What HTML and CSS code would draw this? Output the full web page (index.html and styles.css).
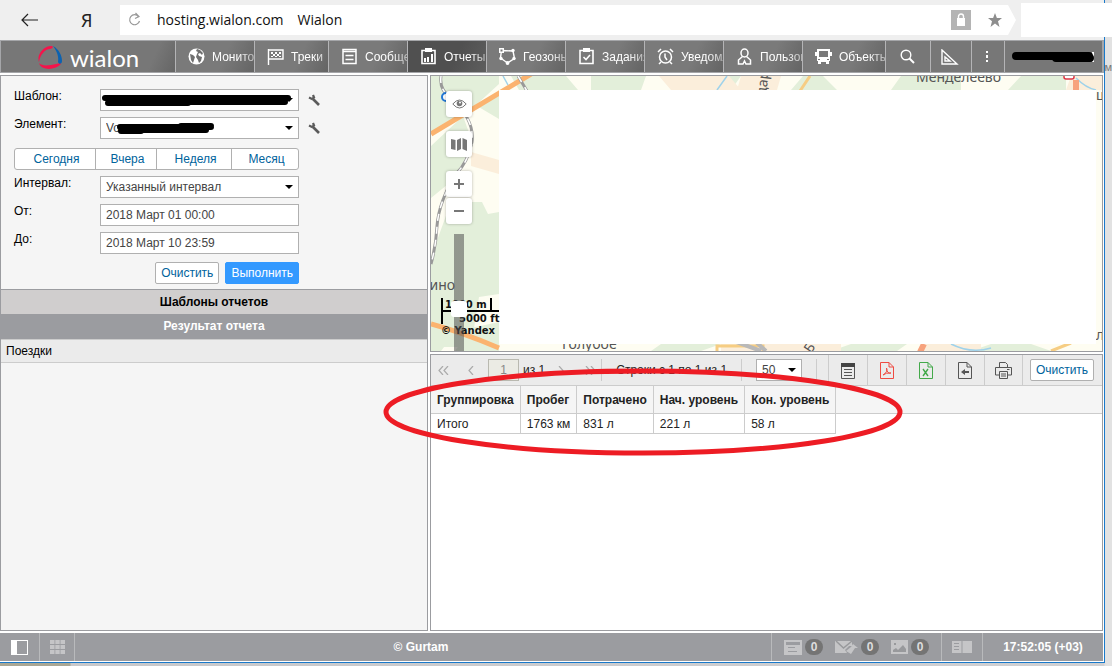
FILE: index.html
```html
<!DOCTYPE html>
<html lang="ru">
<head>
<meta charset="utf-8">
<title>Wialon</title>
<link rel="stylesheet" href="styles.css">
</head>
<body>
<span class="desk-letter">м</span>
<div class="window">
  <header class="chrome">
    <button class="chrome-btn back" aria-label="Назад"><svg width="18" height="14" viewBox="0 0 18 14"><path d="M17 7H1M7 1 1 7l6 6" fill="none" stroke="#222" stroke-width="1.2"/></svg></button>
    <button class="chrome-btn yandex">Я</button>
    <div class="address">
      <button class="chrome-btn" aria-label="Обновить"><svg width="13" height="16" viewBox="0 0 13 16"><path d="M10.500 4.500A5 5 0 1 0 11.500 9M7.500 1l3.500 3.500-4 2" fill="none" stroke="#999" stroke-width="1.2"/></svg></button>
      <span class="url">hosting.wialon.com</span><span class="page-name">Wialon</span>
      <svg class="lock" width="20" height="20" viewBox="0 0 20 20"><path fill="#b4b4b4" d="M0 0h20v20H0z"/><path fill="#fff" d="M6 8h8v8H6z"/><path d="M7.500 8V6.500a2.500 2.500 0 0 1 5 0V8" fill="none" stroke="#fff" stroke-width="1.400"/></svg>
      <svg width="14" height="14" viewBox="0 0 14 14"><path fill="#8d8d8d" d="m7 0 1.900 5H14L10 8.200 11.500 14 7 10.500 2.500 14 4 8.200 0 5h5.100z"/></svg>
    </div>
    <div class="blank"></div>
  </header>

  <nav class="nav">
    <a class="brand" href="#">
      <svg width="25" height="25" viewBox="0 0 25 25"><path fill="#f5134b" d="M1 17C-2 9 7 0 14 1c2 1 0 3-2 3C7 4 2 10 1 17zM1 18c4 4 11 2 17 1 4-1 6-1 4 1-5 5-19 6-21-2z"/><path fill="#0c62b0" d="M15 1c6 3 9 10 9 15 0 3-3 4-4 1 1-5-1-11-5-16z"/></svg>
      <span>wialon</span>
    </a>
    <div class="tabs">
      <a class="tab" href="#"><svg class="ico" viewBox="0 0 17 17"><circle cx="8.500" cy="8.500" r="8" fill="#fff"/><path fill="#6f6f6f" d="m9 1 3 1 3 3-1 2-2-2-2 1 1 2 3 1-1 4-2 2-1-3-2-3 1-3 1-2-2-1zM2 6l3 1 2 2-1 3-1 3-2-3z"/></svg><span>Мониторинг</span></a>
      <a class="tab tab-short" href="#"><svg class="ico" viewBox="0 0 17 17"><path d="M1.500 1v16M2 2h14v9H2" fill="none" stroke="#fff" stroke-width="1.400"/><path fill="#fff" d="M4 4h2v2H4zm4 0h2v2H8zm4 0h2v2h-2zM6 6h2v2H6zm4 0h2v2h-2zM4 8h2v1H4zm4 0h2v1H8zm4 0h2v1h-2z"/></svg><span>Треки</span></a>
      <a class="tab" href="#"><svg class="ico" viewBox="0 0 17 17"><path d="M2 1.500h13v14H2zM2 3.500h13M4.500 7.500h8M4.500 11.500h8" fill="none" stroke="#fff" stroke-width="1.500"/></svg><span>Сообщения</span></a>
      <a class="tab tab-on" href="#"><svg class="ico" viewBox="0 0 17 17"><path d="M2 2.500h13v13H2z" fill="none" stroke="#fff" stroke-width="1.600"/><path fill="#fff" d="M5 0h7v4H5zM4 10h2v4H4zm3-1h2v5H7zm4-3h2v8h-2z"/></svg><span>Отчеты</span></a>
      <a class="tab" href="#"><svg class="ico" viewBox="0 0 17 17"><path d="M2.500 2.500 14 3l1.500 7.500-7 4.500L1.500 10z" fill="none" stroke="#fff" stroke-width="1.400"/><path fill="#fff" d="M0 0h5v5H0z"/><path fill="#777" d="M1.500 1.500h2v2h-2z"/><g fill="#fff"><circle cx="14" cy="2.500" r="1.700"/><circle cx="15" cy="10.500" r="1.700"/><circle cx="8.500" cy="15" r="1.900"/><circle cx="2" cy="10.500" r="1.700"/></g></svg><span>Геозоны</span></a>
      <a class="tab" href="#"><svg class="ico" viewBox="0 0 17 17"><path d="M2 2.500h13v13H2zM5.500 9l2.500 2.500 4-4.500" fill="none" stroke="#fff" stroke-width="1.600"/><path fill="#fff" d="M5 0h7v4H5z"/></svg><span>Задания</span></a>
      <a class="tab" href="#"><svg class="ico" viewBox="0 0 17 17"><circle cx="8.500" cy="9" r="6" fill="none" stroke="#fff" stroke-width="1.500"/><path d="M8 5.500V9l2 3M1 4l3-3M13 1l3 3M4 14l-2 2M13 14l2 2" fill="none" stroke="#fff" stroke-width="1.500"/></svg><span>Уведомления</span></a>
      <a class="tab" href="#"><svg class="ico" viewBox="0 0 17 17"><ellipse cx="8.500" cy="5" rx="3.500" ry="4" fill="none" stroke="#fff" stroke-width="1.500"/><path d="M6.500 8.500 2.500 12v4H7l1.500-3 1.500 3h4.500v-4l-4-3.500" fill="none" stroke="#fff" stroke-width="1.500"/></svg><span>Пользователи</span></a>
      <a class="tab tab-long" href="#"><svg class="ico" viewBox="0 0 17 17"><path fill="#fff" fill-rule="evenodd" d="M2 1h13v3h2v4h-2v5h-1v3h-3v-2H6v2H3v-3H2V8H0V4h2zM4 3v6h9V3zm-1 8v1h2v-1zm9 0v1h2v-1z"/></svg><span>Объекты</span></a>
    </div>
    <button class="tool tool-search" aria-label="Поиск"><svg width="15" height="15" viewBox="0 0 15 15"><path d="M9.500 9.500 14 14" stroke="#fff" stroke-width="2"/><circle cx="6" cy="6" r="4.800" fill="none" stroke="#fff" stroke-width="1.400"/></svg></button>
    <button class="tool tool-measure" aria-label="Инструменты"><svg width="18" height="16" viewBox="0 0 18 16"><path d="M1 1v14h15zM4 8v4h5z" fill="none" stroke="#fff" stroke-width="1.400"/></svg></button>
    <button class="tool tool-more" aria-label="Еще"><svg width="3" height="11" viewBox="0 0 3 11"><path fill="#fff" d="M0 0h2v2H0zm0 4h2v3H0zm0 5h2v2H0z"/></svg></button>
    <button class="tool tool-user" aria-label="Пользователь"><svg width="84" height="12" viewBox="0 0 84 12"><path d="M82 1v10" stroke="#fff" stroke-width="2"/><path d="M5 5h73M45 7h34" stroke="#000" stroke-width="8" stroke-linecap="round"/></svg></button>
  </nav>

  <main class="main">
    <section class="side">
      <form class="form">
        <div class="row"><label for="tpl">Шаблон:</label>
          <div class="field"><select id="tpl"><option></option></select><svg class="mark" width="197" height="20" viewBox="0 0 197 20"><path d="M4 8h183M7 13h80M80 12h104" stroke="#000" stroke-width="6" stroke-linecap="round"/></svg></div>
          <button type="button" class="wrench" aria-label="Свойства шаблона"><svg width="12" height="12" viewBox="0 0 12 12"><path d="m5 5 6 6" stroke="#5b5b5b" stroke-width="2.600"/><path d="M1 3.500 4 5l2-1.500L5 1" fill="none" stroke="#5b5b5b" stroke-width="2.200"/></svg></button></div>
        <div class="row"><label for="unit">Элемент:</label>
          <div class="field"><select id="unit"><option>Vo</option></select><svg class="mark" width="197" height="20" viewBox="0 0 197 20"><path d="M19 9h91M20 13h20M40 12h65M80 8h30" stroke="#000" stroke-width="6" stroke-linecap="round"/></svg></div>
          <button type="button" class="wrench" aria-label="Свойства элемента"><svg width="12" height="12" viewBox="0 0 12 12"><path d="m5 5 6 6" stroke="#5b5b5b" stroke-width="2.600"/><path d="M1 3.500 4 5l2-1.500L5 1" fill="none" stroke="#5b5b5b" stroke-width="2.200"/></svg></button></div>
        <div class="presets"><button type="button">Сегодня</button><button type="button">Вчера</button><button type="button">Неделя</button><button type="button">Месяц</button></div>
        <div class="row"><label for="interval">Интервал:</label><div class="field"><select id="interval"><option>Указанный интервал</option></select></div></div>
        <div class="row"><label for="from">От:</label><div class="field"><input id="from" type="text" value="2018 Март 01 00:00"></div></div>
        <div class="row"><label for="to">До:</label><div class="field"><input id="to" type="text" value="2018 Март 10 23:59"></div></div>
        <div class="actions"><button type="button" class="btn">Очистить</button><button type="button" class="btn btn-primary">Выполнить</button></div>
      </form>
      <h2 class="bar bar-light">Шаблоны отчетов</h2>
      <h2 class="bar bar-dark">Результат отчета</h2>
      <a class="result" href="#">Поездки</a>
    </section>

    <section class="content">
      <div class="map">
        <svg class="map-art" viewBox="0 0 671 275" preserveAspectRatio="xMinYMin slice">
          <path fill="#fefdf2" d="M0 0h671v275H0z"/>
          <path fill="#e3efda" d="M0 0h68v8L44 30 0 58zM0 70l32-30 10 28-20 36-22 18zM46 30l22-12v25zM20 126h31l6 12 11-2v82l-20 3-8 50H0v-90zM80 0h55l12 14H88zM160 0h55l-5 14h-50zM310 0h-60l20 14h30zM372 0h20l14 14h-46zM470 0h60v14h-70zM590 0h45v14h-58zM0 232l20 30-10 13H0zM40 252l28-6v29H24zM230 268h60l-20 7h-50zM420 268h56l-10 7h-66zM560 268h40l20 7h-80z"/>
          <path fill="#fbeedb" d="M40 76l28 8v14l-28-8zM228 0h70l12 14h-70zM310 0h40l-4 14h-40zM640 0h31v14h-36zM290 268h120v7H290zM490 268h60v7h-60z"/>
          <path d="M0 58 100-2M0 248q30 8 68 24" fill="none" stroke="#fbb36f" stroke-width="5"/>
          <path d="M87 0 96 15M10 0q-2 14 10 22 24 22 21 44-4 20-16 32Q8 125 6 150q-1 20-6 38" fill="none" stroke="#999" stroke-width="3"/>
          <path d="M87 0 96 15M10 0q-2 14 10 22 24 22 21 44-4 20-16 32Q8 125 6 150q-1 20-6 38" fill="none" stroke="#fff" stroke-width="1.500" stroke-dasharray="7 6"/>
          <path d="M296 0l-10 14M72 0l5 9M645 2q10 10 20 12M520 268q20 10 40 4" fill="none" stroke="#9fd2ea" stroke-width="1.500"/>
          <path d="M379 0l-10 15M286 275v-5h46v5M620 275l20-8" fill="none" stroke="#f6cd83" stroke-width="3"/>
          <path d="M300 264l30 11M325 266l10 9" fill="none" stroke="#b9b9b9" stroke-width="4"/>
          <path d="M645 4v12M493 268l-4 8" fill="none" stroke="#f7a27d" stroke-width="6"/>
          <rect x="633" y="-8" width="10" height="11" rx="2" fill="#fff" stroke="#d34" stroke-width="1.500"/>
          <circle cx="15" cy="21" r="4" fill="#fff" stroke="#2277d5" stroke-width="2"/>
          <g class="places"><text x="485" y="6">Менделеево</text><text x="-10" y="214">рино</text><text x="131" y="273">Голубое</text><text x="665" y="24">ша</text><text transform="translate(335 20) rotate(-84)">дар</text><text transform="translate(380 278) rotate(-55)">Б</text><text x="665" y="264">л</text></g>
          <path fill="#fff" d="M68 14h597v254H68z"/>
          <path d="M11 222v26M10 235h58M60 222v13" fill="none" stroke="#000" stroke-width="2"/>
          <g class="scale"><text x="14" y="232">1000 m</text><text x="28" y="246">5000 ft</text><text x="10" y="258">© Yandex</text></g>
        </svg>
        <div class="map-controls">
          <button class="map-btn" aria-label="Слои"><svg width="15" height="10" viewBox="0 0 15 10"><path d="M.8 5Q7.500-3 14.200 5 7.500 13 .8 5z" fill="none" stroke="#777"/><circle cx="7.500" cy="4.500" r="2.800" fill="#777"/><circle cx="8" cy="3.500" r="1" fill="#fff"/></svg></button>
          <button class="map-btn" aria-label="Карта"><svg width="16" height="13" viewBox="0 0 16 13"><path fill="#777" d="m0 1 4.500 1v10L0 11zM6 2l4-2v11l-4 2zM11.500 0 16 2v11l-4.500-2z"/></svg></button>
          <div class="zoom"><button class="map-btn" aria-label="Приблизить"><svg width="10" height="10" viewBox="0 0 10 10"><path d="M0 5h10M5 0v10" stroke="#777" stroke-width="2"/></svg></button><button class="map-btn" aria-label="Отдалить"><svg width="10" height="10" viewBox="0 0 10 10"><path d="M0 5h10" stroke="#777" stroke-width="2"/></svg></button></div>
          <input class="zoom-range" type="range" aria-label="Масштаб" value="50">
        </div>
      </div>

      <div class="report">
        <div class="pager">
          <button class="page-btn" aria-label="Первая"><svg width="11" height="9" viewBox="0 0 11 9"><path d="M5 0 1 4.500 5 9M10 0 6 4.500 10 9"/></svg></button>
          <button class="page-btn page-prev" aria-label="Предыдущая"><svg width="6" height="9" viewBox="0 0 6 9"><path d="M5 0 1 4.500 5 9"/></svg></button>
          <input class="page-no" type="text" aria-label="Страница" value="1" disabled>
          <span class="page-of">из 1</span>
          <button class="page-btn page-next" aria-label="Следующая"><svg width="6" height="9" viewBox="0 0 6 9"><path d="m1 0 4 4.500L1 9"/></svg></button>
          <button class="page-btn page-last" aria-label="Последняя"><svg width="11" height="9" viewBox="0 0 11 9"><path d="m1 0 4 4.500L1 9M6 0l4 4.500L6 9"/></svg></button>
          <span class="rows-info">Строки с 1 по 1 из 1</span>
          <select class="page-size" aria-label="Строк на странице"><option>50</option></select>
          <span class="divider"></span>
          <div class="exports">
            <button aria-label="Колонки"><svg width="16" height="17" viewBox="0 0 16 17"><path d="M1.500 1.500h13v15h-13zM4 7.500h8M4 10.500h8M4 13.500h8" fill="none" stroke="#555"/><path fill="#444" d="M1 1h14v4H1z"/></svg></button>
            <button aria-label="PDF"><svg width="16" height="17" viewBox="0 0 16 17"><path d="M1.500.5H10L14.500 5v11.500h-13zM10 .5V5h4.500M4 13q5-3 3.500-7Q8 12 12 11q-5-.5-8 2z" fill="none" stroke="#ef4b42"/></svg></button>
            <button aria-label="Excel"><svg width="16" height="17" viewBox="0 0 16 17"><path d="M1.500.5H10L14.500 5v11.500h-13zM10 .5V5h4.500" fill="none" stroke="#43a94a"/><path d="m5 7 5 7M10 7l-5 7" stroke="#43a94a" stroke-width="1.400"/></svg></button>
            <button aria-label="Экспорт"><svg width="16" height="17" viewBox="0 0 16 17"><path d="M1.500.5H10L14.500 5v11.500h-13zM10 .5V5h4.500" fill="none" stroke="#555"/><path fill="#555" d="m4 10 4-3v2h4v2H8v2z"/></svg></button>
            <button aria-label="Печать"><svg width="17" height="17" viewBox="0 0 17 17"><path d="M4.500 5V.5h6l2 2V5M4 13H.5V5.500h16V13H13M4.500 9.500h8v7h-8zM6 12h5M6 14h5M12 7.500h2.500" fill="none" stroke="#555"/></svg></button>
          </div>
          <button class="btn btn-clear">Очистить</button>
        </div>
        <div class="sheet">
          <table class="grid">
            <thead><tr><th>Группировка</th><th>Пробег</th><th>Потрачено</th><th>Нач. уровень</th><th>Кон. уровень</th></tr></thead>
            <tbody><tr><td>Итого</td><td>1763 км</td><td>831 л</td><td>221 л</td><td>58 л</td></tr></tbody>
          </table>
        </div>
        <svg class="highlight" width="522" height="88" viewBox="0 0 522 88"><ellipse cx="261" cy="44" rx="257" ry="41" fill="none" stroke="#ed1c24" stroke-width="5"/></svg>
      </div>
    </section>
  </main>

  <footer class="status">
    <button class="st-btn st-panel" aria-label="Панель"><svg width="17" height="15" viewBox="0 0 17 15"><path fill="#fff" fill-rule="evenodd" d="M0 0h17v15H0zm6 1v13h10V1z"/></svg></button>
    <button class="st-btn st-grid" aria-label="Сетка"><svg width="15" height="14" viewBox="0 0 15 14"><path fill="#c5c5c7" d="M0 0h4.500v4H0zm5.300 0h4.400v4H5.300zm5.200 0H15v4h-4.500zM0 5h4.500v4H0zm5.300 0h4.400v4H5.300zm5.200 0H15v4h-4.500zM0 10h4.500v4H0zm5.300 0h4.400v4H5.300zm5.200 0H15v4h-4.500z"/></svg></button>
    <span class="copy">© Gurtam</span>
    <div class="counters">
      <button class="counter" aria-label="Уведомления"><svg width="18" height="15" viewBox="0 0 18 15"><path fill="#c5c5c7" fill-rule="evenodd" d="M0 0h18v15H0zm2 2v3h14V2zm2 5v1h7V7zm0 4v1h9v-1z"/></svg><span class="badge">0</span></button>
      <button class="counter" aria-label="Сообщения"><svg width="23" height="15" viewBox="0 0 23 15"><path fill="#c5c5c7" d="M0 1h17v5h-3l-4 4 2 3H0z"/><path d="m1 1 7.500 7L17 1" fill="none" stroke="#98999c" stroke-width="1.500"/><path fill="#c5c5c7" d="m18 4 5 4h-3l-4 6-5-3 5-4z"/></svg><span class="badge">0</span></button>
      <button class="counter" aria-label="Изображения"><svg width="17" height="14" viewBox="0 0 17 14"><path fill="#c5c5c7" d="M0 0h17v14H0z"/><path fill="#98999c" d="M2 12v-2l3-2 2 2 5-5 3 4v3zM3 3h2v2H3z"/></svg><span class="badge">0</span></button>
    </div>
    <button class="st-btn st-book" aria-label="Журнал"><svg width="20" height="12" viewBox="0 0 20 12"><path fill="#c5c5c7" fill-rule="evenodd" d="M0 0h9.500v12H0zm2 2v1h5V2zm0 3v1h5V5zm0 3v1h5V8zM10.500 0H20v12h-9.500z"/></svg></button>
    <span class="clock">17:52:05 (+03)</span>
  </footer>
</div>
</body>
</html>
```

FILE: styles.css
```css
* { box-sizing: border-box; }
html { height: 100%; }
body {
  display: flex;
  height: 100%;
  min-height: 600px;
  margin: 0;
  padding: 0 7px 3px 0;
  background: linear-gradient(90deg, #aaa794 70px, #c8c8ca 71px, #d0d0d2 calc(100% - 8px), #e2e2e2 calc(100% - 7px));
  font: 12px/16px "Liberation Sans", Arial, sans-serif;
  color: #222;
  position: relative;
}
button, input, select { font: inherit; margin: 0; }
button { padding: 0; border: 0; background: none; color: inherit; }
a { color: inherit; text-decoration: none; }
svg { display: block; flex: none; }

.window {
  flex: 1;
  min-width: 0;
  display: flex;
  flex-direction: column;
  background: #fff;
  border-right: 1px solid #1979ca;
  border-bottom: 1px solid #1979ca;
}
.desk-letter { position: absolute; right: 0; top: 59px; font-size: 11px; color: #777; }

.chrome {
  position: relative;
  display: flex;
  align-items: center;
  height: 40px;
  padding: 0 88px 0 21px;
  background: #efefef;
}
.back { width: 53px; text-align: left; }
.yandex { width: 46px; font: 18px "Noto Sans", sans-serif; color: #222; text-align: left; padding-left: 7px; }
.address {
  flex: 1;
  display: flex;
  align-items: center;
  height: 30px;
  padding: 0 14px 0 8px;
  background: #fff;
  clip-path: polygon(0 0, calc(100% - 8px) 0, 100% 50%, calc(100% - 8px) 100%, 0 100%);
  font: 14px/20px "Open Sans", "Noto Sans", sans-serif;
  color: #111;
}
.url { margin-left: 16px; }
.page-name { margin-left: 14px; }
.lock { margin: 0 17px 0 auto; }
.blank { position: absolute; right: -8px; top: 3px; width: 91px; height: 34px; background: #fff; }

.nav {
  display: flex;
  height: 33px;
  border: 1px solid #a5a6a9;
  border-right-width: 2px;
  background: #777;
  color: #fff;
}
.brand {
  flex: none;
  display: flex;
  align-items: center;
  gap: 7px;
  width: 174px;
  padding: 2px 0 0 37px;
  font: 24px/29px Lato, sans-serif;
  background: linear-gradient(115deg, #777 85%, #656565);
}
.tabs { flex: 1; display: flex; min-width: 0; }
.tab {
  flex: 1 1 79px;
  display: flex;
  align-items: center;
  gap: 7px;
  min-width: 0;
  overflow: hidden;
  padding-left: 12px;
  border-left: 1px solid #b4b4b6;
  white-space: nowrap;
  background: linear-gradient(115deg, #7a7a7a 60%, #646464);
}
.tab span { flex: 1; min-width: 0; overflow: hidden; mask-image: linear-gradient(90deg, #000 60%, rgba(0, 0, 0, .5)); }
.tab-short { flex-basis: 74px; }
.tab-long { flex-basis: 83px; }
.tab-on { background: linear-gradient(115deg, #505050 60%, #5e5e5e); }
.ico { width: 17px; height: 17px; }
.tool { flex: none; display: flex; align-items: center; justify-content: center; padding-right: 2px; border-left: 1px solid #b4b4b6; }
.tool-search { width: 45px; }
.tool-measure { width: 41px; }
.tool-more { width: 33px; }
.tool-user { width: 98px; }

.main { flex: 1; display: flex; gap: 2px; min-height: 0; padding: 2px 1px 2px 0; }
.side { flex: none; width: 428px; border: 1px solid #9b9ca0; background: #f5f5f5; }
.form { display: flex; flex-direction: column; gap: 6px; padding: 13px 13px 5px; color: #000; }
.row { display: flex; }
.row label { width: 86px; line-height: 14px; }
.field { position: relative; width: 199px; height: 22px; }
.field input, .field select {
  display: block;
  width: 100%;
  height: 100%;
  padding: 0 5px;
  border: 1px solid #b0b0b0;
  border-radius: 0;
  background: #fff;
  color: #444;
}
.field select, .page-size {
  appearance: none;
  background: #fff url("data:image/svg+xml,%3Csvg xmlns='http://www.w3.org/2000/svg' width='8' height='4'%3E%3Cpath d='M0 0h8L4 4z'/%3E%3C/svg%3E") no-repeat right 5px center;
}
.mark { position: absolute; left: 1px; top: 1px; }
.wrench { margin-left: 9px; }
.presets { display: grid; grid-template-columns: 80fr 61fr 75fr 67fr; width: 285px; height: 22px; margin-top: 3px; border: 1px solid #b0b0b0; border-radius: 3px; background: #fff; color: #00639c; }
.presets button { padding-left: 3px; }
.presets button + button { border-left: 1px solid #b0b0b0; }
.actions { display: flex; justify-content: flex-end; gap: 6px; width: 285px; margin-top: 2px; }
.btn { height: 22px; padding: 0 5px; border: 1px solid #b0b0b0; border-radius: 2px; background: #fff; color: #00639c; }
.btn-primary { border-color: #39f; background: #39f; color: #fff; }
.bar { margin: 0; font-size: 12px; line-height: 24px; text-align: center; }
.bar-light { border-top: 1px solid #9b9ca0; background: #d0cece; color: #000; }
.bar-dark { height: 25px; background: #9b9ca0; color: #fff; }
.result { display: block; padding: 0 5px; border: solid #ccc; border-width: 1px 0; line-height: 22px; background: #ebebeb; color: #000; }

.content { flex: 1; display: flex; flex-direction: column; gap: 2px; min-width: 0; }
.map { position: relative; flex: 1 1 0; overflow: hidden; border: 1px solid #9b9ca0; }
.map-art { position: absolute; inset: 0; width: 100%; height: 100%; }
.places { font: 14px "Noto Sans", sans-serif; fill: #555; }
.scale { font: bold 10px "DejaVu Sans", sans-serif; fill: #111; }
.map-controls { position: absolute; left: 15px; top: 15px; display: flex; flex-direction: column; align-items: center; gap: 14px; }
.map-btn { display: flex; align-items: center; justify-content: center; width: 26px; height: 26px; border-radius: 3px; background: #fff; box-shadow: 0 0 3px rgba(0, 0, 0, .3); }
.zoom { display: flex; flex-direction: column; gap: 1px; }
.zoom-range {
  appearance: none;
  writing-mode: vertical-lr;
  width: 16px;
  height: 150px;
  margin: -4px 0 0;
  background: linear-gradient(rgba(80, 80, 80, .55), rgba(80, 80, 80, .55)) no-repeat center / 10px 100%;
}
.zoom-range::-webkit-slider-thumb { appearance: none; width: 16px; height: 16px; border-radius: 3px; background: #fff; }

.report { position: relative; flex: 1 1 0; border: 1px solid #9b9ca0; background: #fff; }
.pager { display: flex; align-items: center; height: 31px; padding: 0 8px 0 7px; background: #ebebeb; border-bottom: 1px solid #ccc; white-space: nowrap; }
.page-btn { flex: none; fill: none; stroke: #aaa; stroke-width: 1.2; }
.page-prev { margin-left: 19px; }
.page-no { width: 31px; height: 22px; margin-left: 14px; padding: 0; border: 1px solid #b9b9b0; background: #ebebe4; color: #888; text-align: center; }
.page-of { margin-left: 4px; }
.page-next { margin-left: 13px; }
.page-last { margin: 0 5px 0 21px; }
.rows-info { padding: 0 14px; border: solid #ccc; border-width: 0 1px; line-height: 22px; }
.page-size { width: 46px; height: 22px; margin: 0 14px; padding: 0 5px; border: 1px solid #b0b0b0; border-radius: 0; color: #444; }
.divider { width: 1px; height: 22px; background: #ccc; }
.exports { display: flex; align-self: stretch; margin-left: auto; }
.exports button { display: flex; align-items: center; justify-content: center; width: 39px; border-left: 1px solid #ccc; }
.exports button:last-child { border-right: 1px solid #ccc; }
.btn-clear { width: 64px; padding: 0; margin-left: 7px; }
.sheet { background: linear-gradient(#f5f5f5 27px, #ccc 27px, #ccc 28px, #fff 28px); }
.grid { border-collapse: separate; border-spacing: 0; }
.grid th, .grid td { height: 20px; padding: 0 6px; border: solid #ccc; border-width: 0 1px 1px 0; text-align: left; white-space: nowrap; line-height: 16px; color: #222; }
.grid th { height: 28px; }
.highlight { position: absolute; left: -49px; top: 13px; pointer-events: none; }

.status { display: flex; align-items: stretch; height: 28px; margin: 0 1px 1px 0; background: #9b9ca0; color: #fff; font-weight: bold; }
.st-btn { display: flex; align-items: center; justify-content: center; border-right: 1px solid #b9babc; }
.st-panel { width: 40px; }
.st-grid { width: 35px; }
.copy { flex: 1; text-align: center; line-height: 28px; padding-right: 4px; }
.counters { display: flex; gap: 12px; padding: 0 12px; border: solid #b9babc; border-width: 0 1px; }
.counter { display: flex; align-items: center; gap: 3px; }
.badge { width: 18px; height: 16px; border-radius: 8px; background: #747474; color: #ddd; }
.st-book { width: 41px; }
.clock { width: 120px; line-height: 28px; text-align: center; }
```
